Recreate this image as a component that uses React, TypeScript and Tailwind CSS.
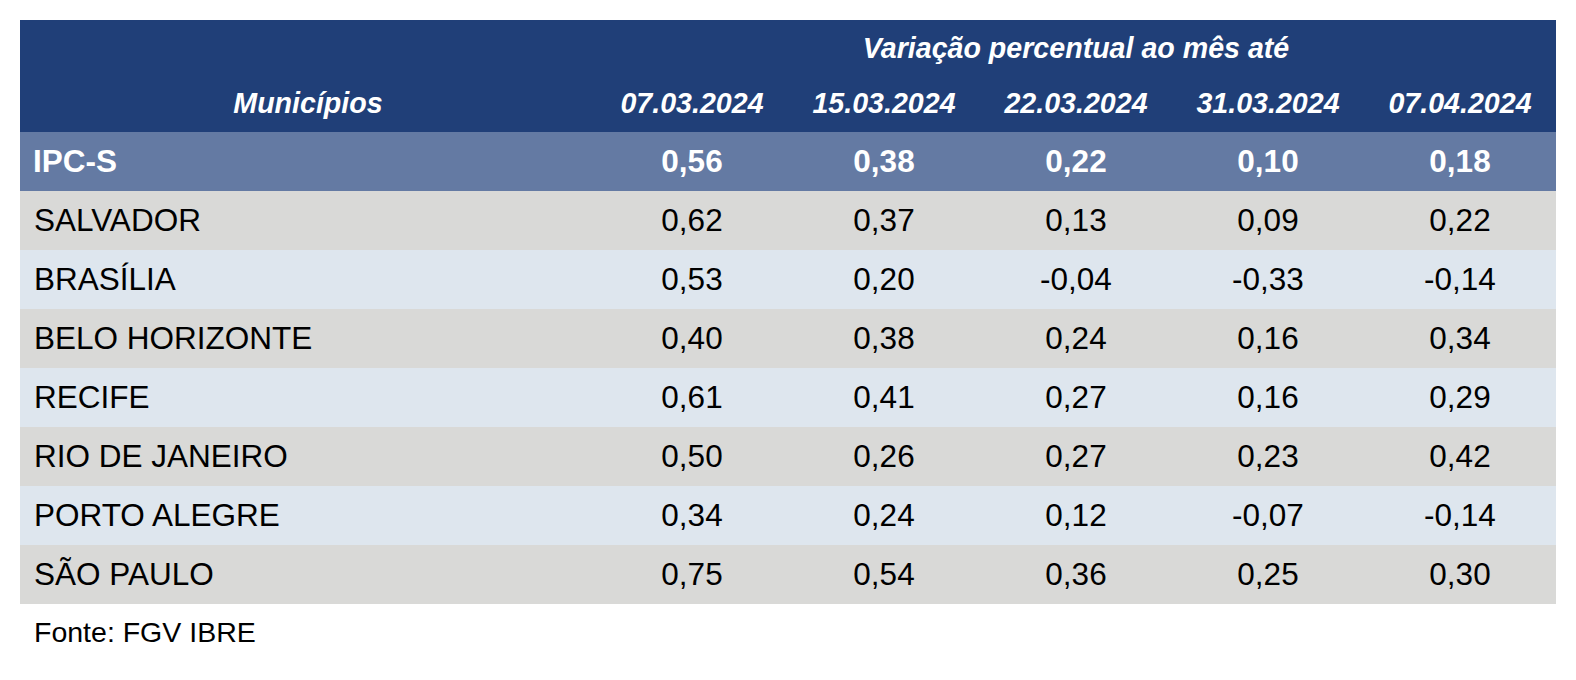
import React from "react";

const dates = ["07.03.2024", "15.03.2024", "22.03.2024", "31.03.2024", "07.04.2024"];
const ipc = ["0,56", "0,38", "0,22", "0,10", "0,18"];
const rows: [string, string[]][] = [
  ["SALVADOR", ["0,62", "0,37", "0,13", "0,09", "0,22"]],
  ["BRASÍLIA", ["0,53", "0,20", "-0,04", "-0,33", "-0,14"]],
  ["BELO HORIZONTE", ["0,40", "0,38", "0,24", "0,16", "0,34"]],
  ["RECIFE", ["0,61", "0,41", "0,27", "0,16", "0,29"]],
  ["RIO DE JANEIRO", ["0,50", "0,26", "0,27", "0,23", "0,42"]],
  ["PORTO ALEGRE", ["0,34", "0,24", "0,12", "-0,07", "-0,14"]],
  ["SÃO PAULO", ["0,75", "0,54", "0,36", "0,25", "0,30"]],
];

export default function App() {
  return (
    <div className="min-h-[680px] w-[1576px] bg-white pt-[20px] pl-[20px] font-['Liberation_Sans',Arial,sans-serif]">
      <div className="w-[1536px]">
        {/* Header */}
        <div className="bg-[#203f78] text-white font-bold italic text-[28.6px] leading-none">
          <div className="flex h-[54px] items-center">
            <div className="w-[576px]" />
            <div className="flex w-[960px] justify-center pt-[2px]">Variação percentual ao mês até</div>
          </div>
          <div className="flex h-[58px] items-center">
            <div className="flex w-[576px] justify-center">Municípios</div>
            {dates.map((d) => (
              <div key={d} className="flex w-[192px] justify-center">
                {d}
              </div>
            ))}
          </div>
        </div>
        {/* IPC-S */}
        <div className="flex h-[59px] items-center bg-[#647aa3] text-white font-bold text-[31.5px] leading-none">
          <div className="w-[576px] pl-[13px]">IPC-S</div>
          {ipc.map((v, i) => (
            <div key={i} className="flex w-[192px] justify-center">
              {v}
            </div>
          ))}
        </div>
        {rows.map(([name, vals], r) => (
          <div
            key={name}
            className={`flex h-[59px] items-center text-black text-[31.5px] leading-none ${
              r % 2 === 0 ? "bg-[#d9d9d7]" : "bg-[#dee6ee]"
            }`}
          >
            <div className="w-[576px] pl-[14px]">{name}</div>
            {vals.map((v, i) => (
              <div key={i} className="flex w-[192px] justify-center">
                {v}
              </div>
            ))}
          </div>
        ))}
        <div className="mt-[14px] pl-[14px] text-[28.5px] leading-none text-black">Fonte: FGV IBRE</div>
      </div>
    </div>
  );
}
